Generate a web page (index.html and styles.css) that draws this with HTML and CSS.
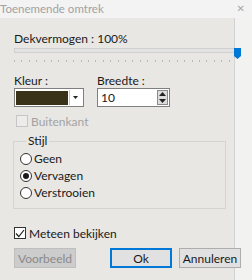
FILE: index.html
```html
<!DOCTYPE html>
<html lang="nl">
<head>
  <meta charset="UTF-8" />
  <title>Toenemende omtrek</title>
  <link rel="stylesheet" href="styles.css">
</head>
<body>
  <div class="titlebar">
    <span class="title">Toenemende omtrek</span>
    <span class="close">&#x2715;</span>
  </div>

  <div class="content">
    <div class="label">Dekvermogen : 100%</div>
    <div class="slider">
      <div class="track"></div>
      <svg class="thumb" width="7" height="11" viewBox="0 0 7 11"><path d="M0 0H7V8L3.5 11L0 8Z" fill="#0078d7"/></svg>
      <div class="ticks"></div>
    </div>

    <div class="row">
      <div class="field">
        <div class="label">Kleur :</div>
        <div class="colorpick">
          <div class="swatch"></div>
          <div class="drop"><svg width="5" height="3" viewBox="0 0 5 3"><path d="M0 0H5L2.5 3Z" fill="#222"/></svg></div>
        </div>
      </div>
      <div class="field">
        <div class="label">Breedte :</div>
        <div class="spin">
          <span class="value">10</span>
          <div class="arrows">
            <svg width="7" height="4" viewBox="0 0 7 4"><path d="M0 4H7L3.5 0Z" fill="#222"/></svg>
            <svg width="7" height="4" viewBox="0 0 7 4"><path d="M0 0H7L3.5 4Z" fill="#222"/></svg>
          </div>
        </div>
      </div>
    </div>

    <label class="check disabled"><span class="box"></span>Buitenkant</label>

    <fieldset class="group">
      <legend>Stijl</legend>
      <label class="radio"><span class="dot"></span>Geen</label>
      <label class="radio on"><span class="dot"></span>Vervagen</label>
      <label class="radio"><span class="dot"></span>Verstrooien</label>
    </fieldset>

    <label class="check live"><span class="box"><svg width="10" height="9" viewBox="0 0 10 9"><path d="M1 4.5L3.8 7.5L9 1" fill="none" stroke="#222" stroke-width="1.2"/></svg></span>Meteen bekijken</label>

    <div class="buttons">
      <button class="btn off">Voorbeeld</button>
      <button class="btn ok">Ok</button>
      <button class="btn cancel">Annuleren</button>
    </div>
  </div>
</body>
</html>
```

FILE: styles.css
```css
html, body {
  margin: 0;
  padding: 0;
}
body {
  width: 252px;
  height: 280px;
  overflow: hidden;
  font-family: Lato, "Liberation Sans", sans-serif;
  font-size: 12px;
  color: #1a1a1a;
  background: linear-gradient(to right, #e8e7e4 234px, #d2d2d2 234px, #d2d2d2 235px, #f2f2f1 235px);
}
.titlebar {
  height: 18px;
  background: #f3f3f3;
  display: flex;
  align-items: center;
  justify-content: space-between;
  padding: 0 7px 2px 0;
  box-sizing: border-box;
}
.title {
  color: #a2a2a2;
  font-size: 11.5px;
}
.close {
  color: #a8a8a8;
  font-family: "DejaVu Sans", sans-serif;
  font-size: 10px;
}
.content {
  padding: 15px 0 0 14px;
}
.label {
  line-height: 12px;
}
.slider {
  position: relative;
  width: 222px;
  margin-top: 3px;
}
.track {
  height: 3px;
  background: #e3e3e3;
  border: 1px solid #d0d0d0;
  border-right: none;
}
.thumb {
  position: absolute;
  left: 220px;
  top: 0;
}
.ticks {
  margin-top: 7px;
  height: 2px;
  background: repeating-linear-gradient(to right, #b8b8b8 0, #b8b8b8 1px, transparent 1px, transparent 7.4px);
}
.row {
  display: flex;
  gap: 13px;
  margin-top: 13px;
}
.field .label {
  margin-bottom: 1px;
}
.colorpick {
  width: 66px;
  height: 17px;
  border: 1px solid #7f7f7f;
  background: #fff;
  display: flex;
  align-items: center;
  padding: 0 1px;
  gap: 1px;
}
.swatch {
  width: 52px;
  height: 14px;
  background: #3a3119;
}
.drop {
  width: 11px;
  height: 15px;
  border-left: 1px solid #c8c8c8;
  display: flex;
  align-items: center;
  justify-content: center;
}
.spin {
  width: 67px;
  height: 17px;
  border: 1px solid #7f7f7f;
  background: #fff;
  display: flex;
  align-items: center;
  justify-content: space-between;
  padding: 0 1px 0 3px;
}
.arrows {
  width: 11px;
  height: 15px;
  border: 1px solid #8a8a8a;
  background: #dcdcdc;
  box-sizing: border-box;
  display: flex;
  flex-direction: column;
  align-items: center;
  justify-content: space-around;
}
.check {
  display: flex;
  align-items: center;
  gap: 3px;
  height: 12px;
}
.check .box {
  width: 10px;
  height: 10px;
  border: 1px solid #333;
  background: #fff;
  display: flex;
  align-items: center;
  justify-content: center;
}
.check.disabled {
  margin: 8px 0 0 2px;
  color: #a3a3a3;
}
.check.disabled .box {
  border-color: #c6c6c6;
  background: #ececea;
}
.group {
  width: 213px;
  margin: 9px 0 0 -1px;
  padding: 4px 0 7px 6px;
  border: 1px solid #d4d4d2;
  box-sizing: border-box;
}
.group legend {
  padding: 0 2px;
  margin-left: 6px;
  line-height: 10px;
}
.radio {
  display: flex;
  align-items: center;
  gap: 2px;
  height: 17px;
}
.radio .dot {
  width: 10px;
  height: 10px;
  border: 1px solid #333;
  border-radius: 50%;
  background: #fff;
  display: flex;
  align-items: center;
  justify-content: center;
}
.radio.on .dot::after {
  content: "";
  width: 6px;
  height: 6px;
  border-radius: 50%;
  background: #1a1a1a;
}
.check.live {
  margin-top: 18px;
}
.buttons {
  display: flex;
  margin-top: 9px;
}
.btn {
  height: 20px;
  width: 62px;
  padding: 0;
  font-family: inherit;
  font-size: 12px;
  background: #e1e1e1;
  border: 1px solid #adadad;
  color: #1a1a1a;
}
.btn.off {
  background: #cccccc;
  border-color: #bfbfbf;
  color: #8a8a8a;
}
.btn.ok {
  margin-left: 34px;
  border: 2px solid #0078d7;
}
.btn.cancel {
  margin-left: 7px;
}
```
